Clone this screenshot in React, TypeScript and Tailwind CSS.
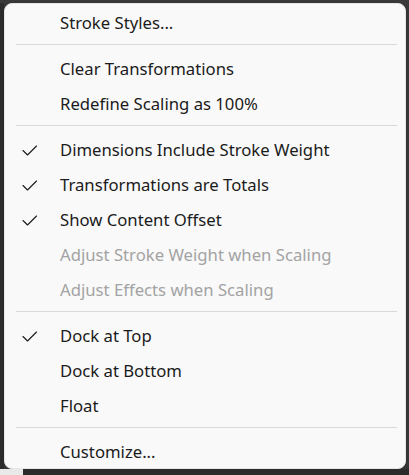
type Item =
  | { kind: "item"; label: string; checked?: boolean; disabled?: boolean }
  | { kind: "sep" };

const ITEMS: Item[] = [
  { kind: "item", label: "Stroke Styles..." },
  { kind: "sep" },
  { kind: "item", label: "Clear Transformations" },
  { kind: "item", label: "Redefine Scaling as 100%" },
  { kind: "sep" },
  { kind: "item", label: "Dimensions Include Stroke Weight", checked: true },
  { kind: "item", label: "Transformations are Totals", checked: true },
  { kind: "item", label: "Show Content Offset", checked: true },
  { kind: "item", label: "Adjust Stroke Weight when Scaling", disabled: true },
  { kind: "item", label: "Adjust Effects when Scaling", disabled: true },
  { kind: "sep" },
  { kind: "item", label: "Dock at Top", checked: true },
  { kind: "item", label: "Dock at Bottom" },
  { kind: "item", label: "Float" },
  { kind: "sep" },
  { kind: "item", label: "Customize..." },
];

function Check() {
  return (
    <svg width="16" height="12" viewBox="0 0 16 12" fill="none">
      <path d="M1 5.5 L5.5 10 L14.5 1" stroke="#1b1b1b" strokeWidth="1.1" strokeLinecap="round" strokeLinejoin="round" />
    </svg>
  );
}

export default function App() {
  return (
    <div className="w-[409px] h-[475px] bg-[#3a3a3a] pt-[3px] overflow-hidden flex flex-col">
      <div className="flex">
        <div className="w-[4px] bg-[#2e2e2e]" />
        <div
          className="w-[402px] h-[466px] bg-[#f9f9f9] rounded-[8px] border border-[#e6e6e6] shadow-[0_2px_6px_rgba(0,0,0,0.2)] pt-[2px] flex flex-col"
          style={{ fontFamily: '"Noto Sans", "Open Sans", sans-serif' }}
        >
          {ITEMS.map((it, i) =>
            it.kind === "sep" ? (
              <div key={i} className="pt-[3px] pb-[7px] pl-[11px] pr-[8px]">
                <div className="h-px bg-[#d9d9d9]" />
              </div>
            ) : (
              <div key={i} className="h-[35px] flex items-center shrink-0">
                <div className="w-[55px] pl-[17px] flex items-center">{it.checked && <Check />}</div>
                <span
                  className={`text-[16.7px] leading-none ${it.disabled ? "text-[#a3a3a3]" : "text-[#1b1b1b]"}`}
                >
                  {it.label}
                </span>
              </div>
            )
          )}
        </div>
      </div>
      <div className="flex h-[6px]">
        <div className="w-[23px] bg-[#e9e9e9]" />
        <div className="flex-1 bg-[#2b2b2b]" />
      </div>
    </div>
  );
}
